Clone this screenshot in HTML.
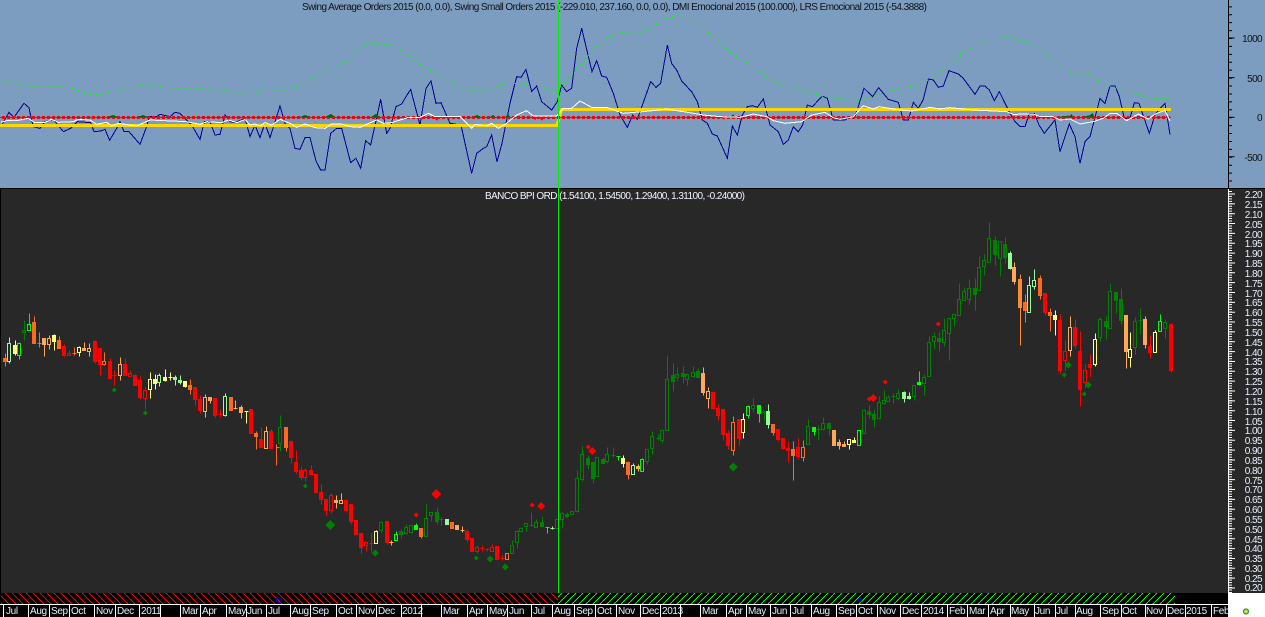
<!DOCTYPE html>
<html><head><meta charset="utf-8"><title>Chart</title>
<style>
html,body{margin:0;padding:0;background:#282828;overflow:hidden}
svg{display:block;font-family:"Liberation Sans",Arial,sans-serif;font-size:10px}
.c path{stroke-width:1}
.R{stroke:#f00;fill:#f00}.r{stroke:#f00;fill:none}
.O{stroke:#ff6a20;fill:#ff6a20}.o{stroke:#ff6a20;fill:none}
.M{stroke:#ff8a3c;fill:#ff8a3c}
.S{stroke:#ffa858;fill:#ffa858}.s{stroke:#ffa858;fill:none}
.Y{stroke:#ffff80;fill:#ffff80}.y{stroke:#ffff80;fill:none}
.P{stroke:#98fb98;fill:#98fb98}.p{stroke:#98fb98;fill:none}
.L{stroke:#0f0;fill:#0f0}.l{stroke:#0f0;fill:none}
.G{stroke:#008000;fill:#008000}.g{stroke:#008000;fill:none}
.ax text{fill:#e8f0ff;letter-spacing:-.55px;text-anchor:end}
.tp text{fill:#111;letter-spacing:-.6px;text-anchor:end}
.dt text{fill:#e8f0ff;letter-spacing:-.35px}
</style></head><body>
<svg width="1265" height="617" viewBox="0 0 1265 617" xmlns="http://www.w3.org/2000/svg">
<defs>
<pattern id="hr" width="7" height="7" patternUnits="userSpaceOnUse"><path d="M0 0L7 7" stroke="#f00" stroke-width="1" fill="none" shape-rendering="crispEdges"/></pattern>
<pattern id="hg" width="7" height="7" patternUnits="userSpaceOnUse"><path d="M0 7L7 0" stroke="#0f0" stroke-width="1" fill="none" shape-rendering="crispEdges"/></pattern>
</defs>
<rect width="1265" height="617" fill="#282828"/>
<rect x="0" y="0" width="1265" height="188" fill="#7c9cc0"/>
<rect x="0" y="188" width="1265" height="1" fill="#000"/>
<rect x="0" y="189" width="1" height="404" fill="#000"/>

<!-- Upper panel series -->
<g fill="none" stroke-linejoin="miter" shape-rendering="crispEdges">
<g transform="scale(.33333)" stroke="#000090" stroke-width="3">
<polyline points="3,380 14,360 27,337 42,352 72,310 87,323 93,352 100,380 120,385 135,365 160,358 190,395 212,385 232,365 272,368 282,395 302,393 315,388 329,421 350,385 360,365 372,395 387,395 420,433 438,385 448,350 470,350 480,343 510,350 525,337 540,340 575,375 600,418 613,365 630,365 645,405 660,403 675,345 690,365 705,368 735,355 750,410 765,375 780,413 795,370 810,413 840,318 855,370 870,385 885,445 900,448 915,413 930,413 948,483 962,510 975,510 992,400 1010,385 1025,385 1052,488 1068,475 1082,505 1097,422 1112,435 1142,298 1160,400 1170,385 1188,320 1205,312 1218,290 1232,268 1260,375"/>
</g>
<g transform="translate(420 0) scale(.33333)" stroke="#000090" stroke-width="3">
<polyline points="0,375 18,265 33,243 48,310 63,308 90,370 123,375 155,520 170,460 190,445 200,440 215,405 231,485 246,430 270,310 290,230 303,232 318,208 335,275 350,258 365,305 395,330 412,305 425,255 440,275 455,265 470,145 485,85 516,215 530,182 545,228 560,232 580,280 600,345 622,382 638,345 652,358 692,245 708,262 722,250 742,135 755,190 770,210 785,243 815,275 832,305 847,360 862,370 877,402 892,408 922,475 937,378 952,405 967,345 982,320 997,317 1012,322 1030,297 1050,375 1075,395 1090,433 1105,420 1120,380 1135,395 1148,375 1162,315 1177,320 1207,288 1222,295 1240,360 1260,360"/>
</g>
<g transform="translate(840 0) scale(.33333)" stroke="#000090" stroke-width="3">
<polyline points="0,360 15,360 28,352 45,350 72,265 98,290 116,263 145,298 175,307 190,360 205,360 220,307 235,325 250,298 265,237 280,240 295,262 310,258 327,212 355,222 370,235 405,283 420,258 435,258 448,270 463,302 478,275 510,340 525,365 540,380 555,380 568,340 583,340 597,375 613,400 645,360 660,455 688,372 705,410 720,490 735,425 750,410 780,295 795,310 810,258 825,258 838,290 853,355 870,355 883,308 897,310 928,400 945,345 960,325 975,310 990,403"/>
</g>
<g stroke="#0f0" stroke-width="3" stroke-dasharray="6 12">
<polyline transform="scale(.33333)" points="3,242 40,248 90,260 140,257 210,263 270,283 300,283 360,272 430,253 500,263 560,268 610,265 680,272 740,283 810,268 860,273 900,255 950,230 985,200 1040,185 1085,140 1115,127 1140,135 1170,132 1210,155 1260,190"/>
<polyline transform="translate(420 0) scale(.33333)" points="0,192 40,215 90,245 145,273 180,270 225,262 255,250 290,250 330,255 380,268 410,272 440,240 480,195 530,140 560,115 600,97 660,100 700,80 740,55 775,45 830,68 880,110 930,155 1010,210 1060,245 1140,265 1200,287 1260,298"/>
<polyline transform="translate(840 0) scale(.33333)" points="0,295 40,305 80,295 120,280 170,268 210,260 250,250 280,230 320,205 370,155 430,125 500,108 540,120 590,140 650,190 700,222 745,222 790,250 840,270 900,285 940,296 985,295"/>
</g>
<path d="M0 125.5H556.7L561.7 109.5H1171" stroke="#ffd700" stroke-width="3"/>
<path d="M0 117.5H1171" stroke="#f00" stroke-width="1"/>
<path d="M2 117.5H1171" stroke="#f00" stroke-width="3" stroke-dasharray="3 2"/>
<g fill="#006400" stroke="none">
<path d="M108 117h10l-5-2zM138 117h10l-5-2zM300 117h10l-5-2zM325 117h10l-4-3zM371 117h8l-3-3zM473 117h8l-4-2zM490 117h5l-2-2zM505 117h5l-2-3zM730 117h5l-2-3zM1059 117h7l4-2h1zM1068 117h5l-1-3zM1082 117h8l1-2zM1087 117h7l-1-4z"/>
</g>
<g fill="#f00" stroke="none">
<path d="M434 117h5l-2 4zM530 117h7l-1 3zM539 117h5l-2 4zM591 117h4l-2 3z"/>
</g>
<g stroke="#fff" stroke-width="3">
<polyline transform="scale(.33333)" points="3,367 20,362 50,362 85,355 105,368 135,367 155,358 175,367 220,365 235,358 270,360 290,373 320,367 335,378 355,370 375,373 410,378 450,360 560,365 600,373 620,365 665,368 685,360 710,368 735,358 750,375 765,372 780,378 795,368 815,375 840,358 870,370 890,382 915,372 945,383 975,385 995,372 1025,372 1050,380 1080,382 1100,373 1130,360 1150,370 1175,368 1225,352 1260,352"/>
<polyline transform="translate(420 0) scale(.33333)" points="0,352 25,340 45,350 120,350 155,385 165,373 200,378 215,370 235,385 260,370 290,345 320,332 340,348 410,348 430,325 455,325 480,303 515,322 560,322 610,340 690,333 740,327 790,335 850,345 900,350 960,352 1000,342 1040,350 1060,362 1095,370 1145,365 1175,345 1215,337 1240,353 1260,358"/>
<polyline transform="translate(840 0) scale(.33333)" points="0,358 40,350 70,317 100,327 118,320 180,330 215,333 270,322 300,327 330,323 400,330 500,335 520,343 580,342 600,350 640,350 660,360 690,357 720,372 760,365 790,355 810,340 830,340 860,362 895,342 925,357 950,340 975,332 990,362"/>
</g>
</g>

<!-- Candles -->
<g class="c" transform="translate(.5 .5)" shape-rendering="crispEdges">
<path class="O" d="M5 353V366M3 358h3V361h-3z"/>
<path class="p" d="M9 337V343M9 361V363M7 343h3V361h-3z"/>
<path class="Y" d="M15 340V355M13 345h3V353h-3z"/>
<path class="l" d="M19 342V343M19 355V359M17 343h3V355h-3z"/>
<path class="g" d="M24 320V330M24 332V340M22 330h3V332h-3z"/>
<path class="l" d="M29 313V324M27 324h3V330h-3z"/>
<path class="O" d="M34 316V343M32 322h3V343h-3z"/>
<path class="O" d="M39 332V347M37 343h4"/>
<path class="S" d="M44 338V356M42 338h3V344h-3z"/>
<path class="s" d="M49 335V338M49 344V349M47 338h3V344h-3z"/>
<path class="Y" d="M54 334V350M52 335h3V341h-3z"/>
<path class="O" d="M59 336V348M57 340h3V348h-3z"/>
<path class="R" d="M64 344V356M62 346h3V355h-3z"/>
<path class="r" d="M69 350V353M67 353h3V355h-3z"/>
<path class="O" d="M74 347V355M72 353h4"/>
<path class="y" d="M79 346V347M79 352V356M77 347h3V352h-3z"/>
<path class="S" d="M84 342V350M82 348h3V350h-3z"/>
<path class="s" d="M89 343V348M89 351V356M87 348h3V351h-3z"/>
<path class="R" d="M95 340V363M93 341h3V361h-3z"/>
<path class="R" d="M100 348V375M98 348h3V364h-3z"/>
<path class="o" d="M104 352V361M104 364V365M102 361h3V364h-3z"/>
<path class="R" d="M110 358V379M108 361h3V378h-3z"/>
<path class="r" d="M114 370V385M112 375h4"/>
<path class="s" d="M120 357V364M120 375V380M118 364h3V375h-3z"/>
<path class="R" d="M125 358V375M123 364h3V375h-3z"/>
<path class="r" d="M130 370V373M128 373h3V376h-3z"/>
<path class="R" d="M135 374V385M133 375h3V385h-3z"/>
<path class="R" d="M140 376V399M138 380h3V397h-3z"/>
<path class="r" d="M145 386V390M145 398V409M143 390h3V398h-3z"/>
<path class="y" d="M150 372V379M150 389V398M148 379h3V389h-3z"/>
<path class="Y" d="M155 374V389M153 379h3V383h-3z"/>
<path class="p" d="M159 373V375M159 382V386M157 375h3V382h-3z"/>
<path class="Y" d="M165 369V381M163 377h3V380h-3z"/>
<path class="y" d="M170 372V380M168 377h4"/>
<path class="P" d="M175 375V385M173 377h3V379h-3z"/>
<path class="P" d="M180 375V384M178 380h3V382h-3z"/>
<path class="Y" d="M185 381V387M183 381h3V386h-3z"/>
<path class="O" d="M190 379V394M188 385h3V389h-3z"/>
<path class="R" d="M195 387V405M193 387h3V399h-3z"/>
<path class="R" d="M200 395V413M198 399h3V410h-3z"/>
<path class="s" d="M205 394V397M205 411V417M203 397h3V411h-3z"/>
<path class="S" d="M210 397V403M208 397h3V400h-3z"/>
<path class="R" d="M215 398V417M213 398h3V415h-3z"/>
<path class="r" d="M220 409V417M218 414h4"/>
<path class="p" d="M225 393V396M225 415V416M223 396h3V415h-3z"/>
<path class="O" d="M231 397V410M229 397h3V410h-3z"/>
<path class="s" d="M235 400V409M233 408h4"/>
<path class="S" d="M241 405V418M239 407h3V412h-3z"/>
<path class="y" d="M246 411V423M244 411h4"/>
<path class="R" d="M251 409V433M249 409h3V433h-3z"/>
<path class="O" d="M256 431V449M254 433h3V436h-3z"/>
<path class="R" d="M261 427V447M259 439h3V447h-3z"/>
<path class="s" d="M266 426V431M264 431h3V448h-3z"/>
<path class="R" d="M271 429V448M269 431h3V448h-3z"/>
<path class="o" d="M276 444V465M276 447h3"/>
<path class="g" d="M280 415V427M280 443V451M278 427h3V443h-3z"/>
<path class="O" d="M286 427V451M284 427h3V447h-3z"/>
<path class="R" d="M291 440V463M289 441h3V457h-3z"/>
<path class="R" d="M296 450V473M294 462h3V471h-3z"/>
<path class="R" d="M301 466V480M299 470h3V477h-3z"/>
<path class="r" d="M305 468V470M305 477V481M303 470h3V477h-3z"/>
<path class="R" d="M311 465V474M309 470h3V474h-3z"/>
<path class="R" d="M316 474V492M314 474h3V492h-3z"/>
<path class="R" d="M321 484V504M319 492h3V499h-3z"/>
<path class="R" d="M326 499V515M324 499h3V510h-3z"/>
<path class="r" d="M331 493V495M331 510V513M329 495h3V510h-3z"/>
<path class="S" d="M336 495V508M334 500h3V502h-3z"/>
<path class="s" d="M341 493V500M339 500h3V503h-3z"/>
<path class="R" d="M346 499V512M344 500h3V510h-3z"/>
<path class="R" d="M351 504V524M349 504h3V521h-3z"/>
<path class="R" d="M356 520V534M354 520h3V534h-3z"/>
<path class="R" d="M361 533V553M359 533h3V547h-3z"/>
<path class="r" d="M366 541V542M366 545V551M364 542h3V545h-3z"/>
<path class="r" d="M371 533V551M369 543h4"/>
<path class="y" d="M376 530V531M374 531h3V543h-3z"/>
<path class="g" d="M381 521V522M381 530V532M379 522h3V530h-3z"/>
<path class="R" d="M387 521V544M385 521h3V542h-3z"/>
<path class="S" d="M391 540V545M389 542h4"/>
<path class="l" d="M396 531V534M396 540V541M394 534h3V540h-3z"/>
<path class="G" d="M401 529V538M399 531h3V534h-3z"/>
<path class="g" d="M406 524V527M406 533V534M404 527h3V533h-3z"/>
<path class="g" d="M411 525V525M411 532V533M409 525h3V532h-3z"/>
<path class="L" d="M416 523V529M414 525h3V529h-3z"/>
<path class="O" d="M421 528V538M419 528h3V536h-3z"/>
<path class="g" d="M426 504V518M426 536V537M424 518h3V536h-3z"/>
<path class="g" d="M431 515V521M429 512h3V515h-3z"/>
<path class="G" d="M437 507V524M435 512h3V521h-3z"/>
<path class="g" d="M441 517V525M439 519h4"/>
<path class="P" d="M447 519V524M445 519h3V524h-3z"/>
<path class="O" d="M452 522V528M450 522h3V528h-3z"/>
<path class="S" d="M457 525V529M455 525h3V529h-3z"/>
<path class="S" d="M462 526V532M460 530h4"/>
<path class="R" d="M467 529V542M465 531h3V539h-3z"/>
<path class="R" d="M472 538V551M470 538h3V551h-3z"/>
<path class="r" d="M477 545V547M477 551V553M475 547h3V551h-3z"/>
<path class="r" d="M482 545V551M480 548h4"/>
<path class="r" d="M487 548V551M485 549h4"/>
<path class="r" d="M492 544V547M490 547h3V551h-3z"/>
<path class="R" d="M497 546V559M495 546h3V559h-3z"/>
<path class="r" d="M502 555V560M500 558h4"/>
<path class="o" d="M507 553V553M505 553h3V559h-3z"/>
<path class="g" d="M512 540V545M510 545h3V553h-3z"/>
<path class="g" d="M517 530V531M517 542V548M515 531h3V542h-3z"/>
<path class="g" d="M521 527V528M519 528h3V531h-3z"/>
<path class="g" d="M526 526V531M524 523h3V526h-3z"/>
<path class="g" d="M531 512V526M529 525h4"/>
<path class="g" d="M536 519V522M534 522h3V527h-3z"/>
<path class="G" d="M542 516V526M540 522h3V526h-3z"/>
<path class="l" d="M547 527V533M545 527h4"/>
<path class="p" d="M552 526V529M550 528h4"/>
<path class="g" d="M555 519h3V528h-3z"/>
<path class="g" d="M562 512V513M562 519V528M560 513h3V519h-3z"/>
<path class="G" d="M567 512V517M565 514h3V516h-3z"/>
<path class="g" d="M570 511h3V514h-3z"/>
<path class="g" d="M577 470V478M577 511V512M575 478h3V511h-3z"/>
<path class="g" d="M582 446V454M582 479V481M580 454h3V479h-3z"/>
<path class="G" d="M588 455V469M586 458h3V464h-3z"/>
<path class="G" d="M593 461V483M591 462h3V478h-3z"/>
<path class="g" d="M595 457h3V476h-3z"/>
<path class="G" d="M603 457V463M601 459h3V463h-3z"/>
<path class="g" d="M607 447V454M607 461V463M605 454h3V461h-3z"/>
<path class="g" d="M613 447V457M611 455h4"/>
<path class="l" d="M618 456V460M616 456h4"/>
<path class="Y" d="M623 455V467M621 458h3V463h-3z"/>
<path class="O" d="M628 461V479M626 462h3V474h-3z"/>
<path class="p" d="M633 463V465M631 465h3V474h-3z"/>
<path class="S" d="M638 464V471M636 466h3V468h-3z"/>
<path class="l" d="M642 458V459M640 459h3V471h-3z"/>
<path class="g" d="M647 461V464M645 449h3V461h-3z"/>
<path class="g" d="M652 431V436M652 448V454M650 436h3V448h-3z"/>
<path class="g" d="M658 434V440M656 438h4"/>
<path class="g" d="M662 429V430M662 440V443M660 430h3V440h-3z"/>
<path class="g" d="M667 355V379M665 379h3V430h-3z"/>
<path class="G" d="M673 363V391M671 375h3V381h-3z"/>
<path class="g" d="M677 367V374M677 377V381M675 374h3V377h-3z"/>
<path class="G" d="M683 366V383M681 373h3V376h-3z"/>
<path class="g" d="M687 373V374M687 379V385M685 374h3V379h-3z"/>
<path class="g" d="M693 366V372M693 376V377M691 372h3V376h-3z"/>
<path class="G" d="M698 368V377M696 371h3V377h-3z"/>
<path class="S" d="M703 367V395M701 373h3V392h-3z"/>
<path class="s" d="M708 387V391M708 398V408M706 391h3V398h-3z"/>
<path class="R" d="M713 391V408M711 392h3V408h-3z"/>
<path class="R" d="M718 404V420M716 408h3V415h-3z"/>
<path class="R" d="M723 409V440M721 409h3V434h-3z"/>
<path class="R" d="M728 430V449M726 433h3V445h-3z"/>
<path class="o" d="M733 416V422M733 450V455M731 422h3V450h-3z"/>
<path class="R" d="M739 419V445M737 419h3V438h-3z"/>
<path class="y" d="M743 413V419M743 432V438M741 419h3V432h-3z"/>
<path class="l" d="M748 405V406M748 415V418M746 406h3V415h-3z"/>
<path class="g" d="M753 398V405M753 408V412M751 405h3V408h-3z"/>
<path class="L" d="M759 405V422M757 405h3V413h-3z"/>
<path class="g" d="M764 410V420M762 412h4"/>
<path class="P" d="M768 404V428M766 411h3V424h-3z"/>
<path class="O" d="M773 424V435M771 424h3V432h-3z"/>
<path class="R" d="M778 429V441M776 429h3V439h-3z"/>
<path class="R" d="M783 438V449M781 438h3V448h-3z"/>
<path class="R" d="M788 441V462M786 448h3V450h-3z"/>
<path class="O" d="M793 441V480M791 449h3V455h-3z"/>
<path class="R" d="M798 438V459M796 447h3V456h-3z"/>
<path class="o" d="M803 440V447M803 457V461M801 447h3V457h-3z"/>
<path class="g" d="M808 419V426M806 426h3V444h-3z"/>
<path class="L" d="M814 427V435M812 427h3V431h-3z"/>
<path class="g" d="M818 425V439M816 429h4"/>
<path class="g" d="M823 417V423M823 429V430M821 423h3V429h-3z"/>
<path class="G" d="M829 423V435M827 423h3V428h-3z"/>
<path class="S" d="M834 430V445M832 430h3V445h-3z"/>
<path class="S" d="M839 439V449M837 442h3V445h-3z"/>
<path class="S" d="M844 441V446M842 444h3V446h-3z"/>
<path class="y" d="M849 444V449M847 439h3V444h-3z"/>
<path class="Y" d="M854 437V442M852 440h3V442h-3z"/>
<path class="l" d="M857 430h3V445h-3z"/>
<path class="g" d="M864 409V410M862 410h3V433h-3z"/>
<path class="G" d="M869 405V418M867 411h3V414h-3z"/>
<path class="G" d="M874 409V427M872 414h3V419h-3z"/>
<path class="g" d="M879 396V402M879 418V419M877 402h3V418h-3z"/>
<path class="g" d="M884 390V400M884 403V404M882 400h3V403h-3z"/>
<path class="g" d="M888 395V397M886 397h3V401h-3z"/>
<path class="g" d="M893 393V403M891 396h4"/>
<path class="g" d="M898 389V393M898 398V400M896 393h3V398h-3z"/>
<path class="P" d="M904 391V402M902 392h3V398h-3z"/>
<path class="P" d="M909 392V399M907 396h3V398h-3z"/>
<path class="g" d="M914 396V400M912 385h3V396h-3z"/>
<path class="L" d="M919 371V385M917 382h3V384h-3z"/>
<path class="g" d="M924 374V377M924 383V395M922 377h3V383h-3z"/>
<path class="g" d="M929 336V342M927 342h3V376h-3z"/>
<path class="g" d="M934 332V336M934 341V349M932 336h3V341h-3z"/>
<path class="G" d="M939 332V351M937 338h3V341h-3z"/>
<path class="g" d="M944 318V330M944 342V346M942 330h3V342h-3z"/>
<path class="g" d="M949 333V360M947 318h3V333h-3z"/>
<path class="g" d="M954 318V326M952 314h3V318h-3z"/>
<path class="g" d="M959 283V299M957 299h3V315h-3z"/>
<path class="g" d="M964 287V291M962 291h3V300h-3z"/>
<path class="g" d="M969 279V288M969 299V304M967 288h3V299h-3z"/>
<path class="G" d="M975 278V310M973 288h3V294h-3z"/>
<path class="g" d="M979 256V267M977 267h3V290h-3z"/>
<path class="g" d="M984 254V260M984 266V275M982 260h3V266h-3z"/>
<path class="g" d="M989 222V238M987 238h3V262h-3z"/>
<path class="G" d="M995 236V265M993 240h3V254h-3z"/>
<path class="g" d="M1000 258V276M998 241h3V258h-3z"/>
<path class="G" d="M1005 237V263M1003 244h3V257h-3z"/>
<path class="P" d="M1010 251V269M1008 253h3V268h-3z"/>
<path class="S" d="M1014 262V284M1012 267h3V281h-3z"/>
<path class="M" d="M1020 274V345M1018 279h3V307h-3z"/>
<path class="O" d="M1025 294V322M1023 302h3V310h-3z"/>
<path class="p" d="M1029 276V285M1027 285h3V312h-3z"/>
<path class="p" d="M1034 269V280M1034 286V289M1032 280h3V286h-3z"/>
<path class="O" d="M1040 275V299M1038 278h3V295h-3z"/>
<path class="R" d="M1045 293V315M1043 293h3V312h-3z"/>
<path class="O" d="M1050 308V331M1048 312h3V315h-3z"/>
<path class="Y" d="M1055 310V335M1053 315h3V319h-3z"/>
<path class="R" d="M1060 314V373M1058 320h3V370h-3z"/>
<path class="r" d="M1065 340V351M1065 360V371M1063 351h3V360h-3z"/>
<path class="s" d="M1070 316V327M1070 350V356M1068 327h3V350h-3z"/>
<path class="R" d="M1075 319V348M1073 327h3V345h-3z"/>
<path class="R" d="M1080 331V406M1078 351h3V389h-3z"/>
<path class="r" d="M1085 364V370M1085 382V388M1083 370h3V382h-3z"/>
<path class="R" d="M1090 354V377M1088 364h3V367h-3z"/>
<path class="y" d="M1095 333V339M1095 364V366M1093 339h3V364h-3z"/>
<path class="g" d="M1100 317V319M1100 337V341M1098 319h3V337h-3z"/>
<path class="G" d="M1106 316V339M1104 321h3V326h-3z"/>
<path class="g" d="M1110 283V291M1108 291h3V328h-3z"/>
<path class="G" d="M1116 292V313M1114 292h3V300h-3z"/>
<path class="G" d="M1121 288V324M1119 299h3V320h-3z"/>
<path class="S" d="M1126 315V368M1124 315h3V351h-3z"/>
<path class="y" d="M1130 332V349M1130 357V367M1128 349h3V357h-3z"/>
<path class="g" d="M1135 317V321M1135 347V354M1133 321h3V347h-3z"/>
<path class="g" d="M1140 308V334M1138 320h4"/>
<path class="S" d="M1145 316V348M1143 319h3V344h-3z"/>
<path class="R" d="M1150 335V358M1148 346h3V352h-3z"/>
<path class="y" d="M1155 330V332M1153 332h3V352h-3z"/>
<path class="l" d="M1160 314V321M1158 321h3V331h-3z"/>
<path class="g" d="M1165 319V322M1165 328V338M1163 322h3V328h-3z"/>
<path class="R" d="M1171 323V372M1169 324h3V370h-3z"/>
</g>

<!-- Markers -->
<g fill="#008000" shape-rendering="crispEdges">
<path d="M114 387.5l2.5 2.5-2.5 2.5-2.5-2.5z"/>
<path d="M145 410.5l2.5 2.5-2.5 2.5-2.5-2.5z"/>
<path d="M305 483.5l2.5 2.5-2.5 2.5-2.5-2.5z"/>
<path d="M330 520l5 5-5 5-5-5z"/>
<path d="M375 549.5l3.5 3.5-3.5 3.5-3.5-3.5z"/>
<path d="M476 555.5l2.5 2.5-2.5 2.5-2.5-2.5z"/>
<path d="M490 555.5l3.5 3.5-3.5 3.5-3.5-3.5z"/>
<path d="M505 563.5l3.5 3.5-3.5 3.5-3.5-3.5z"/>
<path d="M733 462.5l4.5 4.5-4.5 4.5-4.5-4.5z"/>
<path d="M1068 361.5l3.5 3.5-3.5 3.5-3.5-3.5z"/>
<path d="M1064 372.5l2.5 2.5-2.5 2.5-2.5-2.5z"/>
<path d="M1088 381.5l3.5 3.5-3.5 3.5-3.5-3.5z"/>
<path d="M1084 391.5l2.5 2.5-2.5 2.5-2.5-2.5z"/>
</g>
<g fill="#f00" shape-rendering="crispEdges">
<path d="M416 512.5l2.5 2.5-2.5 2.5-2.5-2.5z"/>
<path d="M436 489l5 5-5 5-5-5z"/>
<path d="M532 502.5l2.5 2.5-2.5 2.5-2.5-2.5z"/>
<path d="M541 502l4 4-4 4-4-4z"/>
<path d="M588 444.5l2.5 2.5-2.5 2.5-2.5-2.5z"/>
<path d="M592 447l4 4-4 4-4-4z"/>
<path d="M869 396.5l2.5 2.5-2.5 2.5-2.5-2.5z"/>
<path d="M873 394l4 4-4 4-4-4z"/>
<path d="M885 379.5l2.5 2.5-2.5 2.5-2.5-2.5z"/>
<path d="M938 321.5l2.5 2.5-2.5 2.5-2.5-2.5z"/>
</g>

<!-- Bottom strips -->
<rect x="0" y="593" width="1228" height="24" fill="#000"/>
<rect x="1" y="593" width="557" height="11" fill="url(#hr)"/>
<rect x="558" y="593" width="617" height="11" fill="url(#hg)"/>
<circle cx="279" cy="600" r="2.5" fill="none" stroke="#0000e0" stroke-width="1.2"/>
<circle cx="860" cy="600" r="1.5" fill="none" stroke="#0000e0" stroke-width="1"/>
<rect x="0" y="604" width="1228" height="1" fill="#fff"/>
<rect x="1228" y="593" width="37" height="24" fill="#fff"/>
<circle cx="1246" cy="611.5" r="2.5" fill="#d8d860" stroke="#18a020" stroke-width="1.2"/>

<path stroke="#fff" stroke-width="1" d="M3.5 604V617M28.5 604V617M49.5 604V617M69.5 604V617M94.5 604V617M115.5 604V617M139.5 604V617M160.5 604V617M180.5 604V617M200.5 604V617M226.5 604V617M246.5 604V617M266.5 604V617M290.5 604V617M310.5 604V617M336.5 604V617M356.5 604V617M376.5 604V617M401.5 604V617M421.5 604V617M441.5 604V617M467.5 604V617M487.5 604V617M507.5 604V617M531.5 604V617M552.5 604V617M574.5 604V617M595.5 604V617M616.5 604V617M640.5 604V617M660.5 604V617M680.5 604V617M700.5 604V617M726.5 604V617M746.5 604V617M770.5 604V617M790.5 604V617M811.5 604V617M836.5 604V617M856.5 604V617M877.5 604V617M900.5 604V617M921.5 604V617M947.5 604V617M967.5 604V617M988.5 604V617M1010.5 604V617M1034.5 604V617M1055.5 604V617M1075.5 604V617M1100.5 604V617M1121.5 604V617M1145.5 604V617M1166.5 604V617M1185.5 604V617M1211.5 604V617"/>
<g class="dt">
<text x="6" y="614">Jul</text><text x="30" y="614">Aug</text><text x="51" y="614">Sep</text><text x="71" y="614">Oct</text><text x="96" y="614">Nov</text><text x="117" y="614">Dec</text><text x="141" y="614">2011</text><text x="182" y="614">Mar</text><text x="202" y="614">Apr</text><text x="228" y="614">May</text><text x="247" y="614">Jun</text><text x="268" y="614">Jul</text><text x="292" y="614">Aug</text><text x="312" y="614">Sep</text><text x="338" y="614">Oct</text><text x="358" y="614">Nov</text><text x="378" y="614">Dec</text><text x="402" y="614">2012</text><text x="443" y="614">Mar</text><text x="469" y="614">Apr</text><text x="489" y="614">May</text><text x="509" y="614">Jun</text><text x="533" y="614">Jul</text><text x="554" y="614">Aug</text><text x="576" y="614">Sep</text><text x="597" y="614">Oct</text><text x="618" y="614">Nov</text><text x="642" y="614">Dec</text><text x="662" y="614">2013</text><text x="702" y="614">Mar</text><text x="728" y="614">Apr</text><text x="748" y="614">May</text><text x="772" y="614">Jun</text><text x="792" y="614">Jul</text><text x="813" y="614">Aug</text><text x="838" y="614">Sep</text><text x="858" y="614">Oct</text><text x="879" y="614">Nov</text><text x="902" y="614">Dec</text><text x="923" y="614">2014</text><text x="949" y="614">Feb</text><text x="969" y="614">Mar</text><text x="990" y="614">Apr</text><text x="1011" y="614">May</text><text x="1035" y="614">Jun</text><text x="1056" y="614">Jul</text><text x="1076" y="614">Aug</text><text x="1102" y="614">Sep</text><text x="1122" y="614">Oct</text><text x="1146" y="614">Nov</text><text x="1167" y="614">Dec</text><text x="1186" y="614">2015</text><text x="1213" y="614">Feb</text>
</g>

<!-- Right axes -->
<rect x="1228" y="0" width="1" height="188" fill="#000"/>
<line x1="1230.5" y1="-1.6" x2="1230.5" y2="188" stroke="#000" stroke-width="3" stroke-dasharray="1 6.92"/>
<line x1="1231.5" y1="37.5" x2="1231.5" y2="188" stroke="#000" stroke-width="6" stroke-dasharray="1 38.6"/>
<g class="tp"><text x="1262" y="42">1000</text><text x="1262" y="82">500</text><text x="1262" y="121">0</text><text x="1262" y="161">-500</text></g>
<rect x="1228" y="189" width="1" height="404" fill="#fff"/>
<line x1="1230.5" y1="191" x2="1230.5" y2="593" stroke="#fff" stroke-width="3" stroke-dasharray="1 1.46"/>
<line x1="1232" y1="193.5" x2="1232" y2="593" stroke="#fff" stroke-width="6" stroke-dasharray="1 8.85"/>
<g class="ax"><text x="1262" y="198">2.20</text><text x="1262" y="208">2.15</text><text x="1262" y="218">2.10</text><text x="1262" y="228">2.05</text><text x="1262" y="238">2.00</text><text x="1262" y="247">1.95</text><text x="1262" y="257">1.90</text><text x="1262" y="267">1.85</text><text x="1262" y="277">1.80</text><text x="1262" y="287">1.75</text><text x="1262" y="297">1.70</text><text x="1262" y="306">1.65</text><text x="1262" y="316">1.60</text><text x="1262" y="326">1.55</text><text x="1262" y="336">1.50</text><text x="1262" y="346">1.45</text><text x="1262" y="356">1.40</text><text x="1262" y="365">1.35</text><text x="1262" y="375">1.30</text><text x="1262" y="385">1.25</text><text x="1262" y="395">1.20</text><text x="1262" y="405">1.15</text><text x="1262" y="415">1.10</text><text x="1262" y="425">1.05</text><text x="1262" y="434">1.00</text><text x="1262" y="444">0.95</text><text x="1262" y="454">0.90</text><text x="1262" y="464">0.85</text><text x="1262" y="474">0.80</text><text x="1262" y="484">0.75</text><text x="1262" y="493">0.70</text><text x="1262" y="503">0.65</text><text x="1262" y="513">0.60</text><text x="1262" y="523">0.55</text><text x="1262" y="533">0.50</text><text x="1262" y="543">0.45</text><text x="1262" y="552">0.40</text><text x="1262" y="562">0.35</text><text x="1262" y="572">0.30</text><text x="1262" y="582">0.25</text><text x="1262" y="591">0.20</text></g>

<!-- Titles -->
<text x="302" y="10" fill="#111" textLength="625" lengthAdjust="spacing">Swing Average Orders 2015 (0.0, 0.0), Swing Small Orders 2015 (-229.010, 237.160, 0.0, 0.0), DMI Emocional 2015 (100.000), LRS Emocional 2015 (-54.3888)</text>
<text x="485" y="199" fill="#f0f4ff" textLength="260" lengthAdjust="spacing">BANCO BPI ORD (1.54100, 1.54500, 1.29400, 1.31100, -0.24000)</text>

<!-- Cursor line -->
<rect x="558" y="0" width="1" height="593" fill="#00f000"/>
</svg>
</body></html>
